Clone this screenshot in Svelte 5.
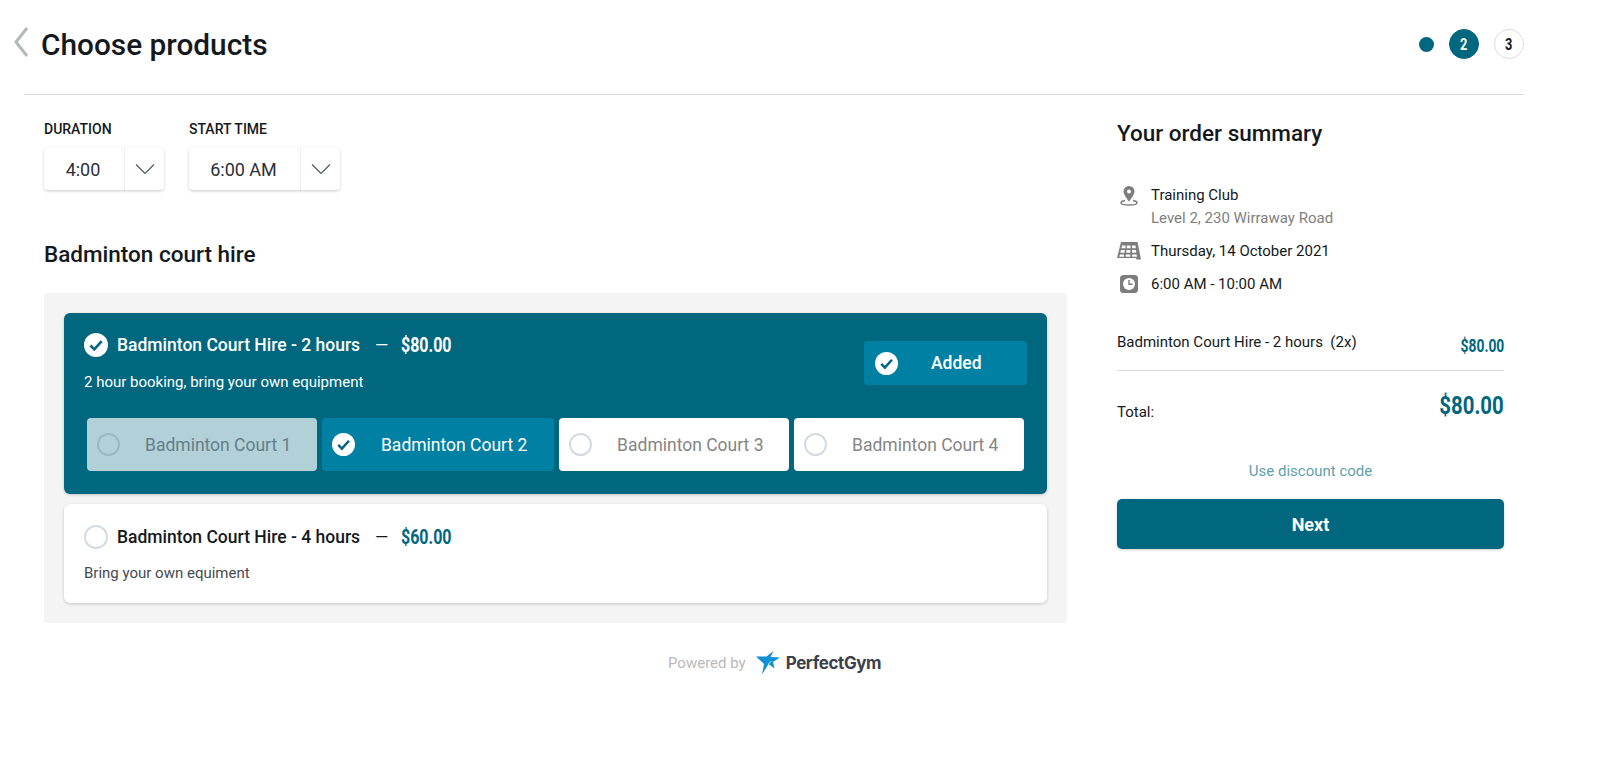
<script>
    // booking step: choose products
    let courts = [
        { name: 'Badminton Court 1', state: 'disabled' },
        { name: 'Badminton Court 2', state: 'selected' },
        { name: 'Badminton Court 3', state: '' },
        { name: 'Badminton Court 4', state: '' }
    ];
</script>

{#snippet check(size)}
    <svg class="check" width={size} height={size} viewBox="0 0 24 24">
        <circle cx="12" cy="12" r="12" fill="#fff" />
        <path d="M6.5 12.5l3.8 3.8 7.4-8.2" fill="none" stroke="#00677f" stroke-width="2.6" />
    </svg>
{/snippet}

{#snippet chevron()}
    <svg width="20" height="12" viewBox="0 0 20 12"><path d="M1 1.5l9 9 9-9" fill="none" stroke="#4a5560" stroke-width="1.1" /></svg>
{/snippet}

<div class="page">
    <header class="top">
        <svg class="back" width="16" height="32" viewBox="0 0 16 32"><path d="M14 2L3 16l11 14" fill="none" stroke="#b4b8bb" stroke-width="3" /></svg>
        <h1>Choose products</h1>
        <div class="steps">
            <span class="dot"></span>
            <span class="step on"><span class="narrow">2</span></span>
            <span class="step"><span class="narrow">3</span></span>
        </div>
    </header>
    <div class="rule"></div>

    <div class="columns">
        <main class="left">
            <div class="filters">
                <div class="filter">
                    <span class="label">DURATION</span>
                    <div class="select" style="width:120px">
                        <span class="value">4:00</span>
                        <span class="arrow">{@render chevron()}</span>
                    </div>
                </div>
                <div class="filter">
                    <span class="label">START TIME</span>
                    <div class="select" style="width:151px">
                        <span class="value">6:00 AM</span>
                        <span class="arrow">{@render chevron()}</span>
                    </div>
                </div>
            </div>

            <h2>Badminton court hire</h2>

            <section class="panel">
                <article class="card active">
                    <div class="card-head">
                        <div>
                            <div class="title-row">
                                {@render check(24)}
                                <span class="title">Badminton Court Hire - 2 hours</span>
                                <span class="dash">—</span>
                                <span class="price">$80.00</span>
                            </div>
                            <p class="desc">2 hour booking, bring your own equipment</p>
                        </div>
                        <div class="added">
                            {@render check(23)}
                            <span>Added</span>
                        </div>
                    </div>
                    <div class="courts">
                        {#each courts as court}
                            <div class="court {court.state}">
                                {#if court.state === 'selected'}
                                    {@render check(23)}
                                {:else}
                                    <span class="radio small"></span>
                                {/if}
                                <span class="court-name">{court.name}</span>
                            </div>
                        {/each}
                    </div>
                </article>

                <article class="card plain">
                    <div class="title-row">
                        <span class="radio"></span>
                        <span class="title">Badminton Court Hire - 4 hours</span>
                        <span class="dash">—</span>
                        <span class="price">$60.00</span>
                    </div>
                    <p class="desc">Bring your own equiment</p>
                </article>
            </section>

            <footer class="powered">
                <span>Powered by</span>
                <svg width="25" height="24" viewBox="0 0 25 24">
                    <path d="M0 5.500h10.500L17.500 0l-3 6 9.500.5-7 4.500 1.500 6.500-6-4.500L6 23.500 8 13z" fill="#0f8fd4" />
                    <path d="M12.500 13l3-3" stroke="#fff" stroke-width="0.800" />
                </svg>
                <span class="brand">PerfectGym</span>
            </footer>
        </main>

        <aside class="summary">
            <h2 class="summary-title">Your order summary</h2>

            <div class="info first">
                <svg width="24" height="20" viewBox="0 0 24 20">
                    <path d="M12 0a5.500 5.500 0 0 0-5.500 5.500C6.500 9 12 15.500 12 15.500S17.500 9 17.500 5.500A5.500 5.500 0 0 0 12 0z" fill="#7d7d7d" />
                    <circle cx="12" cy="5.500" r="2" fill="#fff" />
                    <path d="M8 14.500c-2.500.4-4 1.200-4 2.200 0 1.300 3.500 2.300 8 2.300s8-1 8-2.300c0-1-1.500-1.800-4-2.200" fill="none" stroke="#7d7d7d" stroke-width="1.500" />
                </svg>
                <div>
                    <div>Training Club</div>
                    <div class="muted">Level 2, 230 Wirraway Road</div>
                </div>
            </div>
            <div class="info">
                <svg width="24" height="18" viewBox="0 0 24 18">
                    <path d="M4 0h16.500L24 17.500H19.500L19 16H0z" fill="#7d7d7d" />
                    <path d="M5 3.500h3.500v2.800H4.500zM10 3.500h3.500v2.800H9.700zM15 3.500h3.500l.4 2.800h-3.700zM4 8h3.800l-.3 2.800H3.300zM9.500 8h3.800v2.800H9.200zM15 8h3.900l.4 2.800H15.200zM2.900 12.500h4.300l-.3 2.300H2.300zM8.900 12.500h4.400v2.300H8.700zM15.100 12.500h4.500l.4 2.300h-4.700z" fill="#fff" />
                </svg>
                <div>Thursday, 14 October 2021</div>
            </div>
            <div class="info">
                <svg width="24" height="18" viewBox="0 0 24 18">
                    <rect x="3" y="0" width="18" height="18" rx="3.500" fill="#7d7d7d" />
                    <circle cx="12" cy="9" r="6" fill="#fff" />
                    <path d="M12 5v4.300h3.500" fill="none" stroke="#7d7d7d" stroke-width="1.400" />
                </svg>
                <div>6:00 AM - 10:00 AM</div>
            </div>

            <div class="line-item">
                <span>Badminton Court Hire - 2 hours&nbsp; (2x)</span>
                <span class="item-price">$80.00</span>
            </div>
            <div class="total">
                <span class="total-label">Total:</span>
                <span class="total-price">$80.00</span>
            </div>
            <div class="discount">Use discount code</div>
            <button class="next">Next</button>
        </aside>
    </div>
</div>

<style>
    :global(body) {
        margin: 0;
        background: #fff;
    }

    .page {
        width: 1622px;
        height: 770px;
        overflow: hidden;
        font-family: Roboto, "Liberation Sans", sans-serif;
        color: #15191d;
    }

    .top {
        display: flex;
        align-items: center;
        width: 1524px;
        height: 88px;
        padding-left: 13px;
        box-sizing: border-box;
    }

    .back {
        margin-right: 12px;
        margin-top: -4px;
    }

    h1 {
        margin: 0;
        font-size: 29.800px;
        font-weight: 500;
    }

    .steps {
        margin-left: auto;
        display: flex;
        align-items: center;
        gap: 15px;
    }

    .dot {
        width: 15px;
        height: 15px;
        border-radius: 50%;
        background: #00677f;
    }

    .step {
        width: 30px;
        height: 30px;
        box-sizing: border-box;
        border: 1px solid #ddd;
        border-radius: 50%;
        display: flex;
        align-items: center;
        justify-content: center;
        font-weight: 700;
        font-size: 16px;
    }

    .narrow {
        display: inline-block;
        transform: scaleX(0.8);
    }

    .step.on {
        background: #00677f;
        border-color: #00677f;
        color: #fff;
    }

    .rule {
        margin-left: 24px;
        width: 1500px;
        height: 1px;
        background: #dcdcdc;
        margin-top: 6px;
    }

    .columns {
        display: flex;
    }

    .left {
        margin-left: 44px;
        width: 1023px;
    }

    .filters {
        display: flex;
        gap: 25px;
        padding-top: 26px;
    }

    .label {
        display: block;
        font-size: 14px;
        font-weight: 500;
        line-height: 16px;
        margin-bottom: 11px;
    }

    .select {
        display: flex;
        height: 42px;
        border-radius: 4px;
        background: #fff;
        box-shadow: 0 1px 3px rgba(0, 0, 0, 0.22);
        font-size: 18px;
        line-height: 43px;
    }

    .value {
        flex: 1;
        padding-right: 2px;
        text-align: center;
        color: #2a3038;
    }

    .arrow {
        width: 39px;
        border-left: 1px solid #eee;
        display: flex;
        align-items: center;
        justify-content: center;
    }

    h2 {
        margin: 0;
        font-size: 22.500px;
        font-weight: 500;
        line-height: 28px;
    }

    .left h2 {
        margin-top: 50px;
    }

    .panel {
        margin-top: 25px;
        padding: 20px;
        background: #f4f4f4;
        border-radius: 4px;
        display: flex;
        flex-direction: column;
        gap: 10px;
    }

    .card {
        border-radius: 6px;
        box-shadow: 0 1px 3px rgba(0, 0, 0, 0.2);
    }

    .card.active {
        height: 181px;
        box-sizing: border-box;
        background: #00677f;
        color: #fff;
        padding: 20px 20px 0;
    }

    .card.plain {
        height: 99px;
        box-sizing: border-box;
        background: #fff;
        padding: 21px 20px 0;
    }

    .card-head {
        display: flex;
        justify-content: space-between;
    }

    .title-row {
        display: flex;
        align-items: center;
        height: 24px;
    }

    .check {
        flex: none;
    }

    .title {
        margin-left: 9px;
        font-size: 17.500px;
        font-weight: 500;
    }

    .dash {
        margin-left: 15px;
        font-size: 17px;
    }

    .price {
        display: inline-block;
        width: 50px;
        margin-left: 13px;
        font-size: 20px;
        font-weight: 700;
        color: #00677f;
        white-space: nowrap;
        transform: scaleX(0.8);
        transform-origin: left center;
    }

    .active .price {
        color: #fff;
    }

    .desc {
        margin: 16px 0 0;
        font-size: 15px;
        line-height: 17px;
        color: #454b50;
    }

    .active .desc {
        margin-top: 17px;
        color: #fff;
    }

    .added {
        display: flex;
        align-items: center;
        width: 163px;
        height: 44px;
        margin-top: 8px;
        padding-left: 11px;
        box-sizing: border-box;
        border-radius: 4px;
        background: #0081a3;
        font-size: 17.500px;
        font-weight: 500;
    }

    .added span {
        margin-left: 33px;
    }

    .courts {
        display: flex;
        gap: 5px;
        margin: 27px 3px 0 3px;
    }

    .court {
        flex: 1;
        height: 53px;
        display: flex;
        align-items: center;
        padding-left: 10px;
        border-radius: 4px;
        background: #fff;
        color: #858585;
        font-size: 17.500px;
    }

    .court.disabled {
        background: #b2d0d8;
        color: #647f89;
    }

    .court.selected {
        background: #0081a3;
        color: #fff;
        flex: 1.010;
    }

    .court-name {
        margin-left: 26px;
        white-space: nowrap;
    }

    .radio + .court-name {
        margin-left: 25px;
    }

    .radio {
        flex: none;
        width: 24px;
        height: 24px;
        box-sizing: border-box;
        border: 2px solid #d3dbe2;
        border-radius: 50%;
    }

    .radio.small {
        width: 23px;
        height: 23px;
    }

    .disabled .radio {
        border-color: #9bb9c3;
    }

    .powered {
        display: flex;
        align-items: center;
        margin-top: 28px;
        margin-left: 624px;
        font-size: 15px;
        color: #b9b9b9;
        white-space: nowrap;
    }

    .powered svg {
        margin-left: 10px;
    }

    .brand {
        margin-left: 5px;
        font-family: Inter, sans-serif;
        font-weight: 700;
        font-size: 17px;
        letter-spacing: -0.4px;
        color: #3b404a;
    }

    .summary {
        margin-left: 50px;
        width: 387px;
        font-size: 15px;
    }

    .summary-title {
        margin-top: 24px;
    }

    .info {
        display: flex;
        gap: 10px;
        margin-bottom: 15px;
        line-height: 18px;
    }

    .info svg {
        flex: none;
    }

    .info.first {
        margin-top: 39px;
        margin-bottom: 15px;
    }

    .info.first .muted {
        margin-top: 5px;
    }

    .muted {
        color: #808080;
    }

    .line-item {
        display: flex;
        justify-content: space-between;
        margin-top: 40px;
        height: 37px;
        border-bottom: 1px solid #dcdcdc;
        line-height: 18px;
    }

    .item-price {
        display: inline-block;
        font-size: 17.500px;
        font-weight: 700;
        color: #00677f;
        margin-top: 4px;
        transform: scaleX(0.79);
        transform-origin: right center;
    }

    .total {
        display: flex;
        justify-content: space-between;
        align-items: flex-end;
        margin-top: 19px;
    }

    .total-label {
        margin-bottom: -1px;
    }

    .total-price {
        display: inline-block;
        font-size: 26.500px;
        font-weight: 700;
        color: #00677f;
        line-height: 30px;
        transform: scaleX(0.77);
        transform-origin: right center;
    }

    .discount {
        margin-top: 42px;
        text-align: center;
        color: #5f9fae;
        line-height: 18px;
    }

    .next {
        display: block;
        width: 100%;
        height: 50px;
        margin-top: 19px;
        border: 0;
        border-radius: 5px;
        background: #00677f;
        color: #fff;
        font-family: inherit;
        font-size: 18px;
        font-weight: 700;
        box-shadow: 0 1px 3px rgba(0, 0, 0, 0.2);
    }
</style>
